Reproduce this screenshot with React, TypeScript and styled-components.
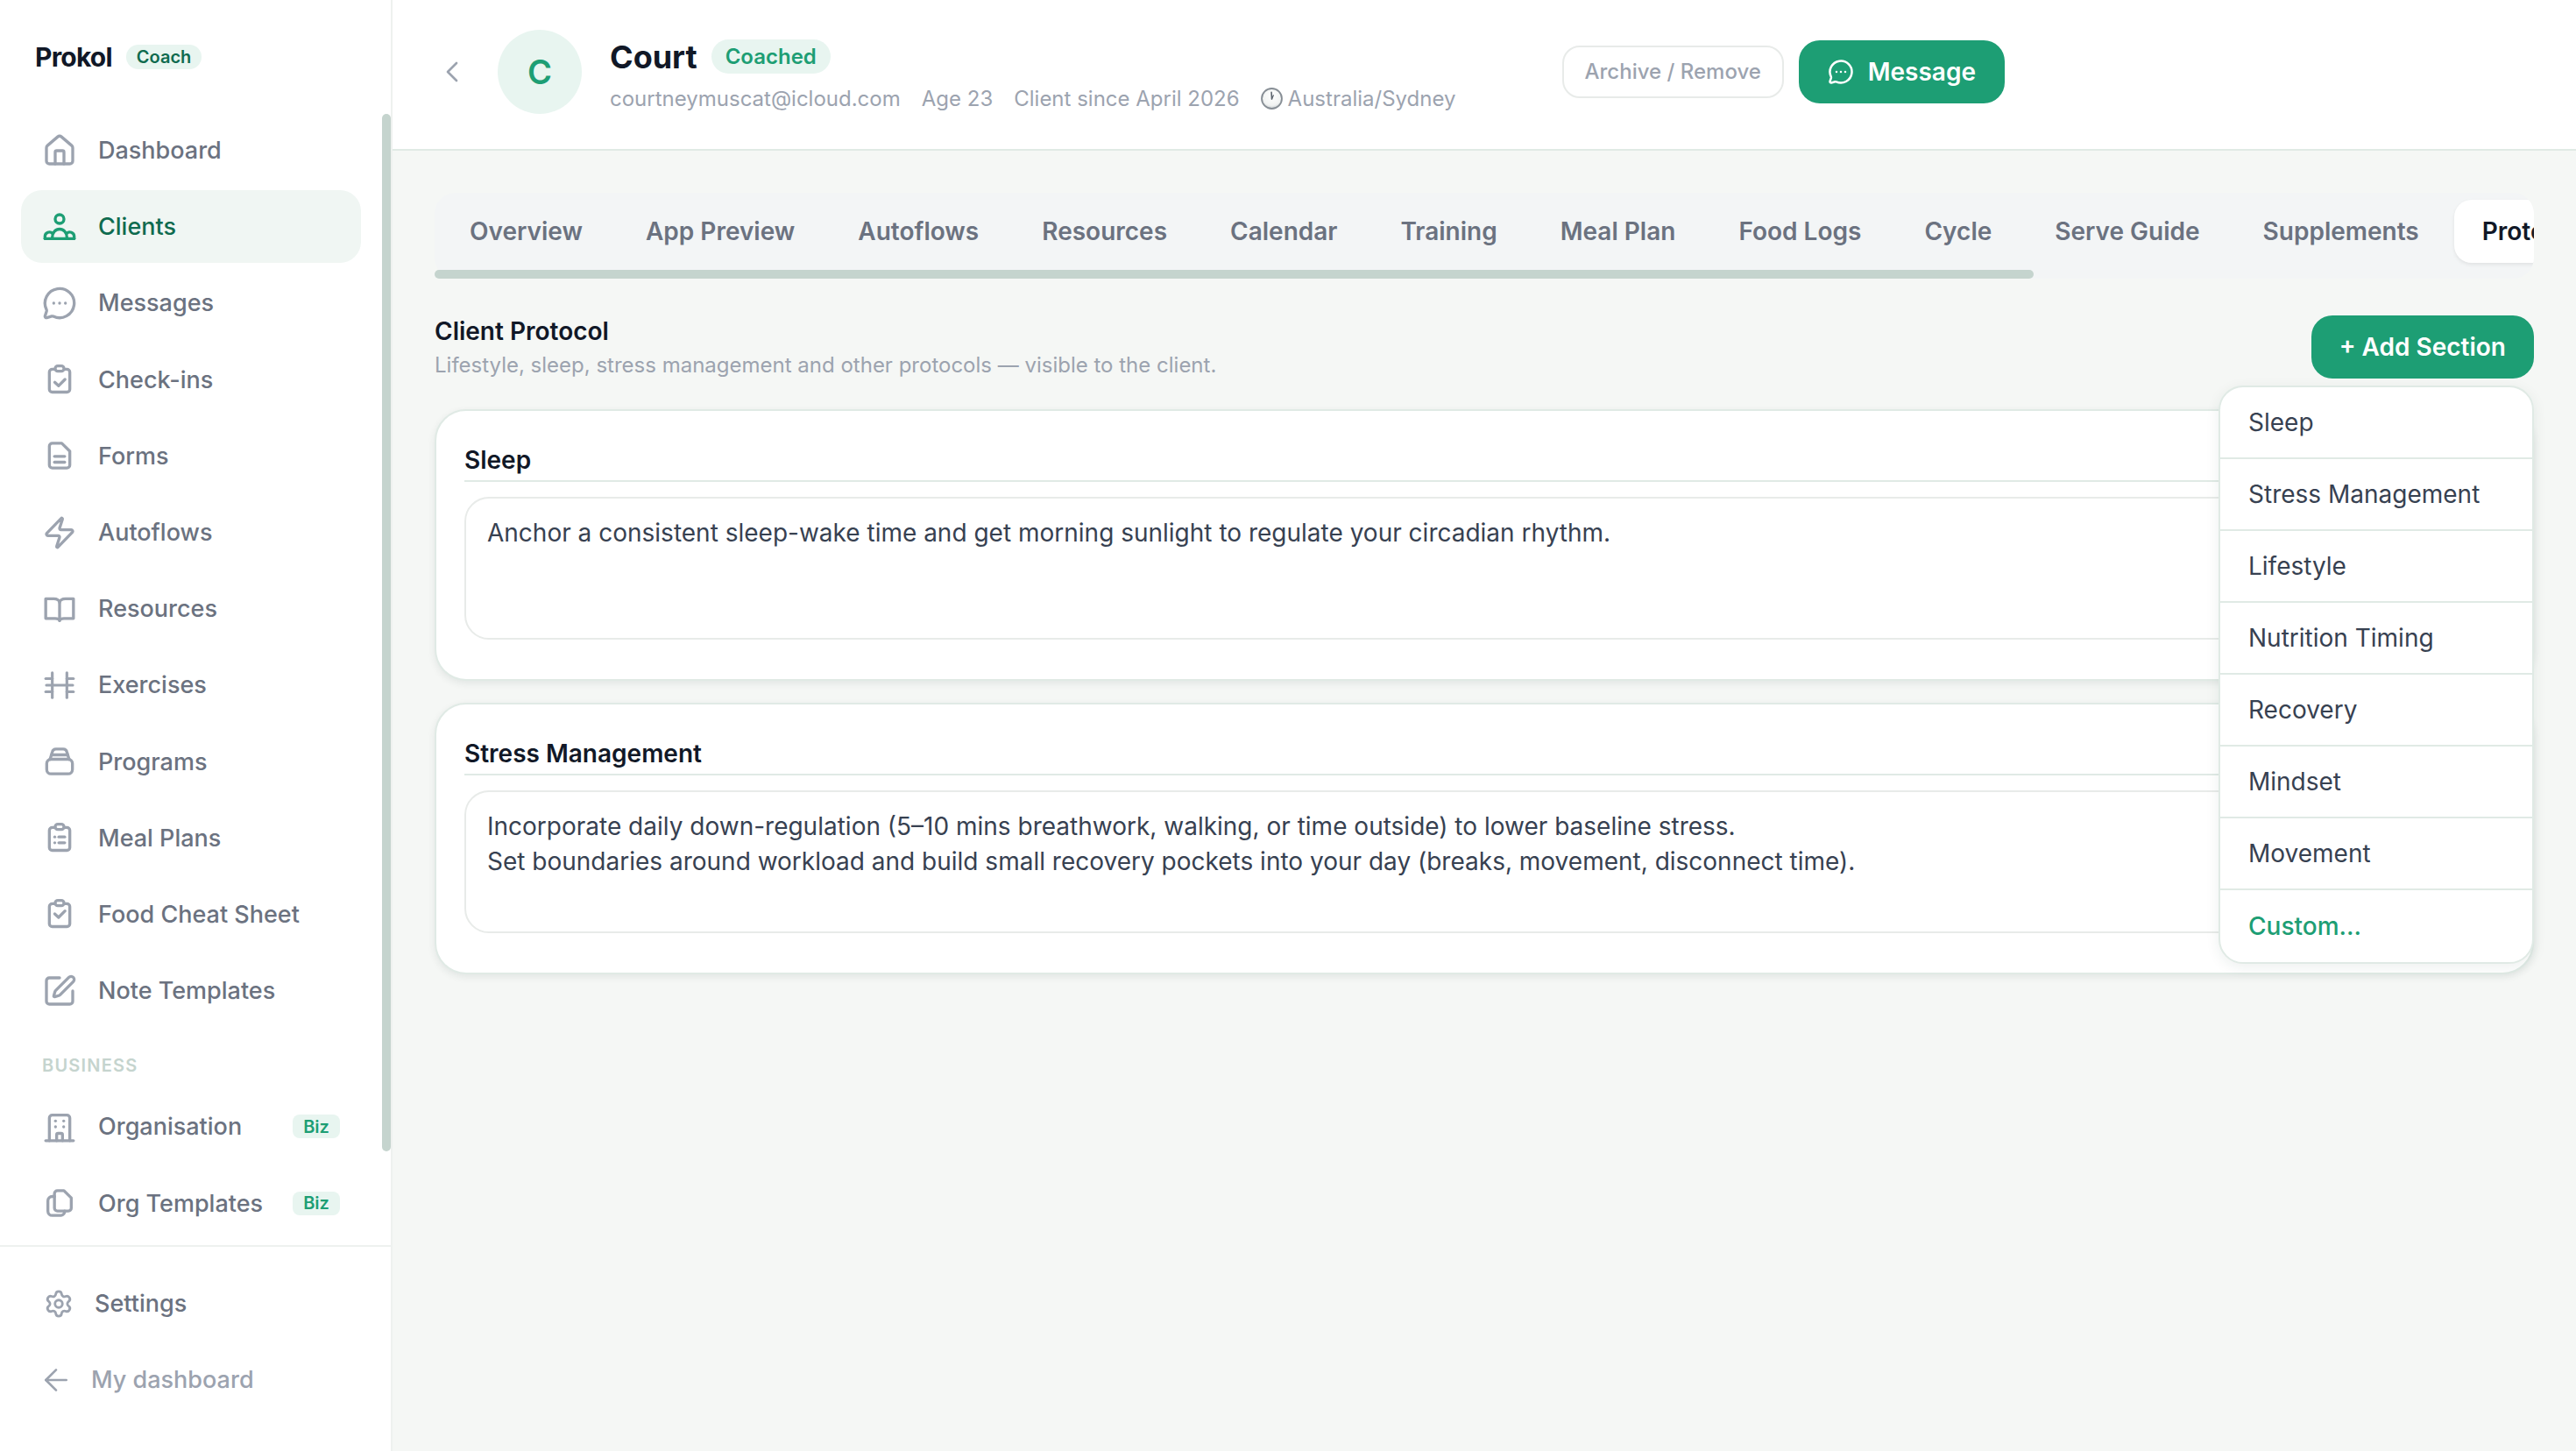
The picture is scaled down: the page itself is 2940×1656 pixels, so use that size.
import React from "react";
import styled, { createGlobalStyle } from "styled-components";
import {
  ChevronLeft,
  House,
  MessageCircleMore,
  Settings,
  ArrowLeft,
  SquarePen,
  Zap,
} from "lucide-react";

const GlobalStyle = createGlobalStyle`
html, body {
  margin: 0;
  padding: 0;
  background: #f5f7f5;
}
body {
  font-family: "Inter", "Liberation Sans", sans-serif;
  -webkit-font-smoothing: antialiased;
}
* {
  box-sizing: border-box;
}
`;

const Page = styled.div`
  display: flex;
  width: 2940px;
  height: 1656px;
  overflow: hidden;
  background: #f5f7f5;
`;

// SIDEBAR
const Sidebar = styled.aside`
  position: relative;
  flex: 0 0 448px;
  display: flex;
  flex-direction: column;
  background: #ffffff;
  border-right: 2px solid #eef1ef;
`;

const Brand = styled.div`
  display: flex;
  align-items: center;
  gap: 16px;
  height: 130px;
  padding: 0 0 0 40px;
`;

const BrandName = styled.span`
  font-size: 30px;
  font-weight: 700;
  letter-spacing: -0.8px;
  color: #111827;
`;

const RoleBadge = styled.span`
  display: inline-flex;
  align-items: center;
  height: 28px;
  padding: 0 12px;
  border-radius: 14px;
  background: #e8f5f0;
  color: #0f6b4f;
  font-size: 20px;
  font-weight: 600;
`;

const NavScroll = styled.nav`
  flex: 1;
  display: flex;
  flex-direction: column;
  gap: 4px;
  padding: 0 34px 0 24px;
  overflow: hidden;
`;

const NavItem = styled.a<{ $active?: boolean }>`
  flex: 0 0 83.2px;
  display: flex;
  align-items: center;
  gap: 24px;
  padding: 0 24px;
  border-radius: 24px;
  background: ${(p) => (p.$active ? "#f0f6f3" : "transparent")};
  color: ${(p) => (p.$active ? "#0f6b4f" : "#6b7280")};
  font-size: 27px;
  font-weight: 500;
  white-space: nowrap;

  svg {
    flex: 0 0 40px;
    color: ${(p) => (p.$active ? "#1d9e74" : "#9ca3af")};
  }
`;

const NavGroupLabel = styled.div`
  flex: 0 0 auto;
  margin: 28px 0 12px;
  padding-left: 24px;
  color: #c5d4ce;
  font-size: 20px;
  font-weight: 600;
  letter-spacing: 1.2px;
  text-transform: uppercase;
`;

const NavLabel = styled.span`
  flex: 1;
`;

const BizBadge = styled.span`
  display: inline-flex;
  align-items: center;
  justify-content: center;
  width: 54px;
  height: 27px;
  border-radius: 8px;
  background: #e8f5f0;
  color: #1d9e74;
  font-size: 20px;
  font-weight: 600;
`;

const ScrollThumb = styled.div`
  position: absolute;
  top: 130px;
  right: 0;
  width: 10px;
  height: 1184px;
  border-radius: 6px;
  background: #c5d4ce;
`;

const SidebarFooter = styled.div`
  flex: 0 0 235px;
  display: flex;
  flex-direction: column;
  gap: 4px;
  padding: 23px 34px 0 24px;
  border-top: 2px solid #eef1ef;
`;

const FooterItem = styled.a<{ $muted?: boolean }>`
  flex: 0 0 83px;
  display: flex;
  align-items: center;
  gap: ${(p) => (p.$muted ? "20px" : "24px")};
  padding-left: ${(p) => (p.$muted ? "20px" : "26px")};
  color: ${(p) => (p.$muted ? "#9ca3af" : "#6b7280")};
  font-size: 27px;
  font-weight: 500;

  svg {
    color: #9ca3af;
  }
`;

// MAIN
const Main = styled.main`
  flex: 1;
  display: flex;
  flex-direction: column;
  min-width: 0;
`;

const TopBar = styled.header`
  flex: 0 0 172px;
  display: flex;
  align-items: center;
  justify-content: space-between;
  width: 100%;
  padding: 0 652px 7px 52px;
  background: #ffffff;
  border-bottom: 2px solid #e0eae5;
`;

const ClientInfo = styled.div`
  display: flex;
  align-items: center;
`;

const BackButton = styled.div`
  display: flex;
  align-items: center;
  width: 72px;
  color: #9ca3af;
  margin-left: -4px;
`;

const Avatar = styled.div`
  display: flex;
  align-items: center;
  justify-content: center;
  width: 96px;
  height: 96px;
  margin-right: 32px;
  border-radius: 50%;
  background: #e8f5f0;
  color: #1d9e74;
  font-size: 38px;
  font-weight: 600;
`;

const ClientText = styled.div`
  margin-top: 6px;
`;

const NameRow = styled.div`
  display: flex;
  align-items: center;
  gap: 16px;
  height: 44px;
`;

const ClientName = styled.span`
  font-size: 36px;
  font-weight: 700;
  color: #111827;
`;

const StatusBadge = styled.span`
  display: inline-flex;
  align-items: center;
  height: 39px;
  padding: 0 16px;
  border-radius: 20px;
  background: #e8f5f0;
  color: #1d9e74;
  font-size: 24px;
  font-weight: 600;
`;

const MetaRow = styled.div`
  display: flex;
  align-items: center;
  gap: 24px;
  margin-top: 11px;
  color: #9ca3af;
  font-size: 24px;
`;

const Timezone = styled.span`
  display: inline-flex;
  align-items: center;
  gap: 6px;
`;

const Actions = styled.div`
  display: flex;
  align-items: center;
  gap: 17px;
`;

const ArchiveButton = styled.button`
  width: 253px;
  height: 60px;
  border: 2px solid #e8ebe9;
  border-radius: 20px;
  background: #ffffff;
  color: #9ca3af;
  font-family: inherit;
  font-size: 24px;
  font-weight: 500;
`;

const PrimaryButton = styled.button`
  display: inline-flex;
  align-items: center;
  justify-content: center;
  gap: 16px;
  height: 72px;
  padding: 0 32px;
  border: 0;
  border-radius: 24px;
  background: #1d9e74;
  color: #ffffff;
  font-family: inherit;
  font-size: 28px;
  font-weight: 600;
`;

const MessageButton = styled(PrimaryButton)`
  padding: 0 33px;
`;

const Content = styled.div`
  position: relative;
  flex: 1;
  padding: 48px 48px 0;
`;

const TabRail = styled.div`
  position: relative;
  height: 98px;
`;

const TabStrip = styled.div`
  display: flex;
  gap: 8px;
  height: 98px;
  padding: 8px 0 0 8px;
  border-radius: 24px;
  overflow: hidden;
  background: #f3f5f6;
`;

const Tab = styled.div<{ $active?: boolean }>`
  flex: 0 0 auto;
  display: flex;
  align-items: center;
  height: 72px;
  padding: 0 32px;
  border-radius: 20px;
  background: ${(p) => (p.$active ? "#ffffff" : "transparent")};
  box-shadow: ${(p) => (p.$active ? "0 2px 4px rgba(0,0,0,0.08)" : "none")};
  color: ${(p) => (p.$active ? "#111827" : "#6b7280")};
  font-size: 28px;
  font-weight: 600;
`;

const TabThumb = styled.div`
  position: absolute;
  left: 0;
  bottom: 0;
  width: 1825px;
  height: 10px;
  border-radius: 6px;
  background: #c5d4ce;
`;

const SectionHead = styled.div`
  display: flex;
  justify-content: space-between;
  align-items: flex-start;
  margin-top: 42px;
`;

const SectionTitle = styled.h2`
  margin: 0;
  font-size: 28px;
  line-height: 36px;
  font-weight: 600;
  color: #111827;
`;

const SectionHint = styled.p`
  margin: 3px 0 0;
  font-size: 24px;
  line-height: 36px;
  color: #9ca3af;
`;

const CardList = styled.div`
  display: flex;
  flex-direction: column;
  gap: 25px;
  margin-top: 32px;
`;

const Card = styled.section`
  height: 310px;
  padding: 32px 32px 0;
  border: 2px solid #e0eae5;
  border-radius: 36px;
  background: #ffffff;
  box-shadow: 0 3px 8px rgba(30, 60, 50, 0.09);
`;

const CardTitle = styled.h3`
  margin: 0;
  height: 49px;
  padding-top: 6px;
  border-bottom: 2px solid #e0eae5;
  font-size: 28px;
  line-height: 36px;
  font-weight: 600;
  color: #111827;
`;

const NoteBox = styled.div`
  height: 163px;
  margin-top: 17px;
  padding: 19px 24px;
  border: 2px solid #e8ebe9;
  border-radius: 28px;
  color: #374151;
  font-size: 28px;
  line-height: 40px;
  white-space: pre-line;
`;

const Menu = styled.div`
  position: absolute;
  top: 268px;
  right: 48px;
  width: 360px;
  border: 2px solid #e0eae5;
  border-radius: 28px;
  overflow: hidden;
  background: #ffffff;
  box-shadow: 0 4px 16px rgba(30, 60, 50, 0.08);
`;

const MenuItem = styled.div<{ $accent?: boolean }>`
  display: flex;
  align-items: center;
  height: 82px;
  padding: 0 32px;
  border-bottom: 2px solid #e0eae5;
  color: ${(p) => (p.$accent ? "#1d9e74" : "#374151")};
  font-size: 28px;
  font-weight: ${(p) => (p.$accent ? 500 : 400)};

  &:last-child {
    border-bottom: 0;
  }
`;

// ICONS (hand drawn where lucide has no match)
const Glyph: React.FC<{ children: React.ReactNode; stroke?: number }> = ({ children, stroke = 2 }) => (
  <svg width="40" height="40" viewBox="0 0 24 24" fill="none" stroke="currentColor" strokeWidth={stroke} strokeLinecap="round" strokeLinejoin="round">
    {children}
  </svg>
);

const ClientsIcon = () => (
  <Glyph>
    <circle cx="12" cy="6.6" r="3" />
    <path d="M7 20v-1a5 5.5 0 0 1 10 0v1" />
    <path d="M7.2 16.5A3 3 0 0 0 2 18.5V20" />
    <path d="M16.8 16.5A3 3 0 0 1 22 18.5V20" />
    <path d="M2 20h20" />
  </Glyph>
);

const ClipboardBase: React.FC<{ children: React.ReactNode }> = ({ children }) => (
  <Glyph>
    <path d="M8.5 5H7a2 2 0 0 0-2 2v11.7a2 2 0 0 0 2 2h10a2 2 0 0 0 2-2V7a2 2 0 0 0-2-2h-1.5" />
    <rect x="9" y="2.8" width="6" height="3.6" rx="1.8" />
    {children}
  </Glyph>
);

const CheckinsIcon = () => (
  <ClipboardBase>
    <path d="m8.7 14 2.6 2.4 4.4-4.4" />
  </ClipboardBase>
);

const FoodSheetIcon = () => (
  <ClipboardBase>
    <path d="m8.7 12 2.6 2.4 4.4-4.4" />
  </ClipboardBase>
);

const MealPlanIcon = () => (
  <ClipboardBase>
    <path d="M8.7 11.5h.01" />
    <path d="M11.5 11.5h4" />
    <path d="M8.7 15.5h.01" />
    <path d="M11.5 15.5h4" />
  </ClipboardBase>
);

const FormIcon = () => (
  <Glyph>
    <path d="M7 3.5h6.5L19 9v9.5a2 2 0 0 1-2 2H7a2 2 0 0 1-2-2v-13a2 2 0 0 1 2-2z" />
    <path d="M8.5 12.5h7" />
    <path d="M8.5 16.5h7" />
  </Glyph>
);

const BookIcon = () => (
  <Glyph>
    <path d="M12 7.5V20" />
    <path d="M2.5 5H8a4 2.5 0 0 1 4 2.5A4 2.5 0 0 1 16 5h5.5v13.5H15a3 1.5 0 0 0-3 1.5 3 1.5 0 0 0-3-1.5H2.5z" />
  </Glyph>
);

const BarbellIcon = () => (
  <Glyph stroke={1.9}>
    <path d="M7 3.5v17" />
    <path d="M17 3.5v17" />
    <path d="M2.5 7.5H7" />
    <path d="M2.5 16.5H7" />
    <path d="M3 12h18" />
    <path d="M17 7.5h4.5" />
    <path d="M17 16.5h4.5" />
  </Glyph>
);

const StackIcon = () => (
  <Glyph>
    <rect x="3.2" y="10.5" width="17.6" height="10" rx="3" />
    <path d="M5.5 10.5 7 5.5Q7.5 3.5 9.5 3.5h5q2 0 2.5 2l1.5 5" />
    <path d="M6.5 7.5h11" />
  </Glyph>
);

const OrgIcon = () => (
  <Glyph>
    <path d="M5 21.5V6a2 2 0 0 1 2-2h10a2 2 0 0 1 2 2v15.5" />
    <path d="M2.5 21.5h19" />
    <path d="M10 21.5v-4a1 1 0 0 1 1-1h2a1 1 0 0 1 1 1v4" />
    <path d="M9.2 8h.01" />
    <path d="M14.8 8h.01" />
    <path d="M9.2 12h.01" />
    <path d="M14.8 12h.01" />
  </Glyph>
);

const OrgTemplatesIcon = () => (
  <Glyph>
    <path d="M10.5 3.5H15l5 5v7a2 2 0 0 1-2 2h-7.5a2 2 0 0 1-2-2v-10a2 2 0 0 1 2-2z" />
    <path d="M8.5 7.5H7a3 3 0 0 0-3 3v7a3 3 0 0 0 3 3h6a3 3 0 0 0 2.5-3" />
  </Glyph>
);

const ClockGlyph = () => (
  <svg width="25" height="25" viewBox="0 0 24 24">
    <defs>
      <radialGradient id="clockFace" cx="50%" cy="35%" r="70%">
        <stop offset="0%" stopColor="#ffffff" />
        <stop offset="70%" stopColor="#f1f3f2" />
        <stop offset="100%" stopColor="#b9c0c4" />
      </radialGradient>
    </defs>
    <circle cx="12" cy="12" r="11" fill="url(#clockFace)" stroke="#878e95" strokeWidth="1.8" />
    <path d="M12 12.5 11.6 5" stroke="#5b636c" strokeWidth="1.5" strokeLinecap="round" />
    <path d="M12 12.5 13.8 8.5" stroke="#5b636c" strokeWidth="1.2" strokeLinecap="round" />
  </svg>
);

type NavEntry = { label: string; icon: React.ReactNode; active?: boolean };

const navEntries: NavEntry[] = [
  { label: "Dashboard", icon: <House size={40} /> },
  { label: "Clients", icon: <ClientsIcon />, active: true },
  { label: "Messages", icon: <MessageCircleMore size={40} /> },
  { label: "Check-ins", icon: <CheckinsIcon /> },
  { label: "Forms", icon: <FormIcon /> },
  { label: "Autoflows", icon: <Zap size={40} /> },
  { label: "Resources", icon: <BookIcon /> },
  { label: "Exercises", icon: <BarbellIcon /> },
  { label: "Programs", icon: <StackIcon /> },
  { label: "Meal Plans", icon: <MealPlanIcon /> },
  { label: "Food Cheat Sheet", icon: <FoodSheetIcon /> },
  { label: "Note Templates", icon: <SquarePen size={40} /> },
];

const tabs = [
  "Overview",
  "App Preview",
  "Autoflows",
  "Resources",
  "Calendar",
  "Training",
  "Meal Plan",
  "Food Logs",
  "Cycle",
  "Serve Guide",
  "Supplements",
];

const menuItems = [
  "Sleep",
  "Stress Management",
  "Lifestyle",
  "Nutrition Timing",
  "Recovery",
  "Mindset",
  "Movement",
];

const App: React.FC = () => {
  return (
    <Page>
      <GlobalStyle />
      <Sidebar>
        <Brand>
          <BrandName>Prokol</BrandName>
          <RoleBadge>Coach</RoleBadge>
        </Brand>
        <NavScroll>
          {navEntries.map((entry) => (
            <NavItem key={entry.label} $active={entry.active}>
              {entry.icon}
              <NavLabel>{entry.label}</NavLabel>
            </NavItem>
          ))}
          <NavGroupLabel>Business</NavGroupLabel>
          <NavItem>
            <OrgIcon />
            <NavLabel>Organisation</NavLabel>
            <BizBadge>Biz</BizBadge>
          </NavItem>
          <NavItem>
            <OrgTemplatesIcon />
            <NavLabel>Org Templates</NavLabel>
            <BizBadge>Biz</BizBadge>
          </NavItem>
        </NavScroll>
        <ScrollThumb />
        <SidebarFooter>
          <FooterItem>
            <Settings size={34} />
            Settings
          </FooterItem>
          <FooterItem $muted>
            <ArrowLeft size={40} strokeWidth={1.6} />
            My dashboard
          </FooterItem>
        </SidebarFooter>
      </Sidebar>

      <Main>
        <TopBar>
          <ClientInfo>
            <BackButton>
              <ChevronLeft size={40} strokeWidth={1.6} />
            </BackButton>
            <Avatar>C</Avatar>
            <ClientText>
              <NameRow>
                <ClientName>Court</ClientName>
                <StatusBadge>Coached</StatusBadge>
              </NameRow>
              <MetaRow>
                <span>courtneymuscat@icloud.com</span>
                <span>Age 23</span>
                <span>Client since April 2026</span>
                <Timezone>
                  <ClockGlyph />
                  Australia/Sydney
                </Timezone>
              </MetaRow>
            </ClientText>
          </ClientInfo>
          <Actions>
            <ArchiveButton>Archive / Remove</ArchiveButton>
            <MessageButton>
              <MessageCircleMore size={30} />
              Message
            </MessageButton>
          </Actions>
        </TopBar>

        <Content>
          <TabRail>
            <TabStrip>
              {tabs.map((tab) => (
                <Tab key={tab}>{tab}</Tab>
              ))}
              <Tab $active>Protocol</Tab>
            </TabStrip>
            <TabThumb />
          </TabRail>

          <SectionHead>
            <div>
              <SectionTitle>Client Protocol</SectionTitle>
              <SectionHint>
                Lifestyle, sleep, stress management and other protocols — visible to the client.
              </SectionHint>
            </div>
            <PrimaryButton>+ Add Section</PrimaryButton>
          </SectionHead>

          <CardList>
            <Card>
              <CardTitle>Sleep</CardTitle>
              <NoteBox>
                Anchor a consistent sleep-wake time and get morning sunlight to regulate your circadian rhythm.
              </NoteBox>
            </Card>
            <Card>
              <CardTitle>Stress Management</CardTitle>
              <NoteBox>
                {"Incorporate daily down-regulation (5–10 mins breathwork, walking, or time outside) to lower baseline stress.\nSet boundaries around workload and build small recovery pockets into your day (breaks, movement, disconnect time)."}
              </NoteBox>
            </Card>
          </CardList>

          <Menu>
            {menuItems.map((item) => (
              <MenuItem key={item}>{item}</MenuItem>
            ))}
            <MenuItem $accent>Custom...</MenuItem>
          </Menu>
        </Content>
      </Main>
    </Page>
  );
};

export default App;
